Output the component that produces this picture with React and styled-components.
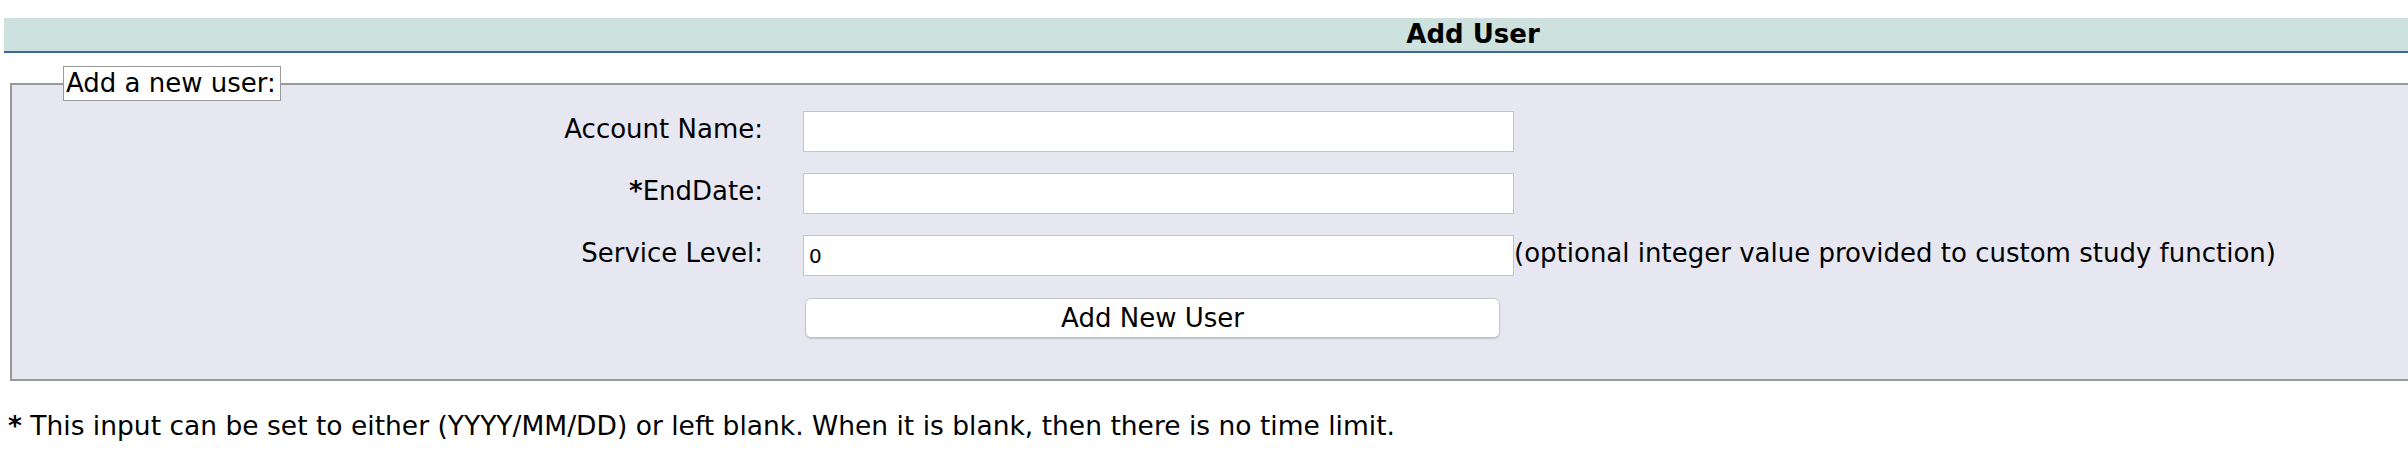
import React from "react";
import styled, { createGlobalStyle } from "styled-components";

const GlobalStyle = createGlobalStyle`
  html, body {
    margin: 0;
    padding: 0;
    overflow: hidden;
    background: #fff;
  }
  body {
    font-family: "DejaVu Sans", Verdana, sans-serif;
    font-size: 26px;
    color: #000;
  }
`;

const Page = styled.div`
  width: 2938px;
  padding: 18px 0 0 4px;
`;

const TitleBar = styled.div`
  height: 33px;
  line-height: 33px;
  background: #cde2df;
  border-bottom: 2px solid #3f6694;
  text-align: center;
  font-weight: bold;
`;

const FormBox = styled.fieldset`
  margin: 13px 0 0 6px;
  padding: 10px 0 41px 51px;
  border: 2px solid #999;
  background: #e7e7f1;
`;

const Legend = styled.legend`
  padding: 0 4px 0 2px;
  line-height: 33px;
  background: #fff;
  border: 1px solid #999;
`;

const FormGrid = styled.div`
  display: grid;
  grid-template-columns: 700px 711px auto;
  grid-auto-rows: 41px;
  column-gap: 40px;
  row-gap: 21px;
  align-items: center;
`;

const Label = styled.label`
  justify-self: end;
  margin-top: -6px;
`;

const Required = styled.b`
  font-weight: bold;
`;

const TextInput = styled.input`
  box-sizing: border-box;
  width: 711px;
  height: 41px;
  margin: 0;
  padding: 0 5px;
  border: 1px solid #c4c4c4;
  background: #fff;
  font-family: "DejaVu Sans", Verdana, sans-serif;
  font-size: 20px;
  color: #000;
  outline: none;
`;

const Note = styled.span`
  margin-left: -40px;
  margin-top: -6px;
  white-space: nowrap;
`;

const SubmitButton = styled.button`
  grid-column: 2;
  box-sizing: border-box;
  width: 695px;
  height: 40px;
  margin: 0 0 0 2px;
  border: 1px solid #c6c6c6;
  border-radius: 6px;
  background: #fff;
  box-shadow: 0 1px 1px rgba(0, 0, 0, 0.15);
  font-family: "DejaVu Sans", Verdana, sans-serif;
  font-size: 26px;
  color: #000;
`;

const Footnote = styled.p`
  margin: 29px 0 0 4px;
  font-size: 26.5px;
`;

const fields = [
  { label: "Account Name:", value: "" },
  { label: "EndDate:", required: true, value: "" },
  {
    label: "Service Level:",
    value: "0",
    note: "(optional integer value provided to custom study function)",
  },
];

export default function App() {
  return (
    <Page>
      <GlobalStyle />
      <TitleBar>Add User</TitleBar>
      <FormBox>
        <Legend>Add a new user:</Legend>
        <FormGrid>
          {fields.map((f) => (
            <React.Fragment key={f.label}>
              <Label>
                {f.required && <Required>*</Required>}
                {f.label}
              </Label>
              <TextInput type="text" defaultValue={f.value} />
              {f.note ? <Note>{f.note}</Note> : <span />}
            </React.Fragment>
          ))}
          <SubmitButton type="button">Add New User</SubmitButton>
        </FormGrid>
      </FormBox>
      <Footnote>
        <Required>*</Required> This input can be set to either (YYYY/MM/DD) or
        left blank. When it is blank, then there is no time limit.
      </Footnote>
    </Page>
  );
}
